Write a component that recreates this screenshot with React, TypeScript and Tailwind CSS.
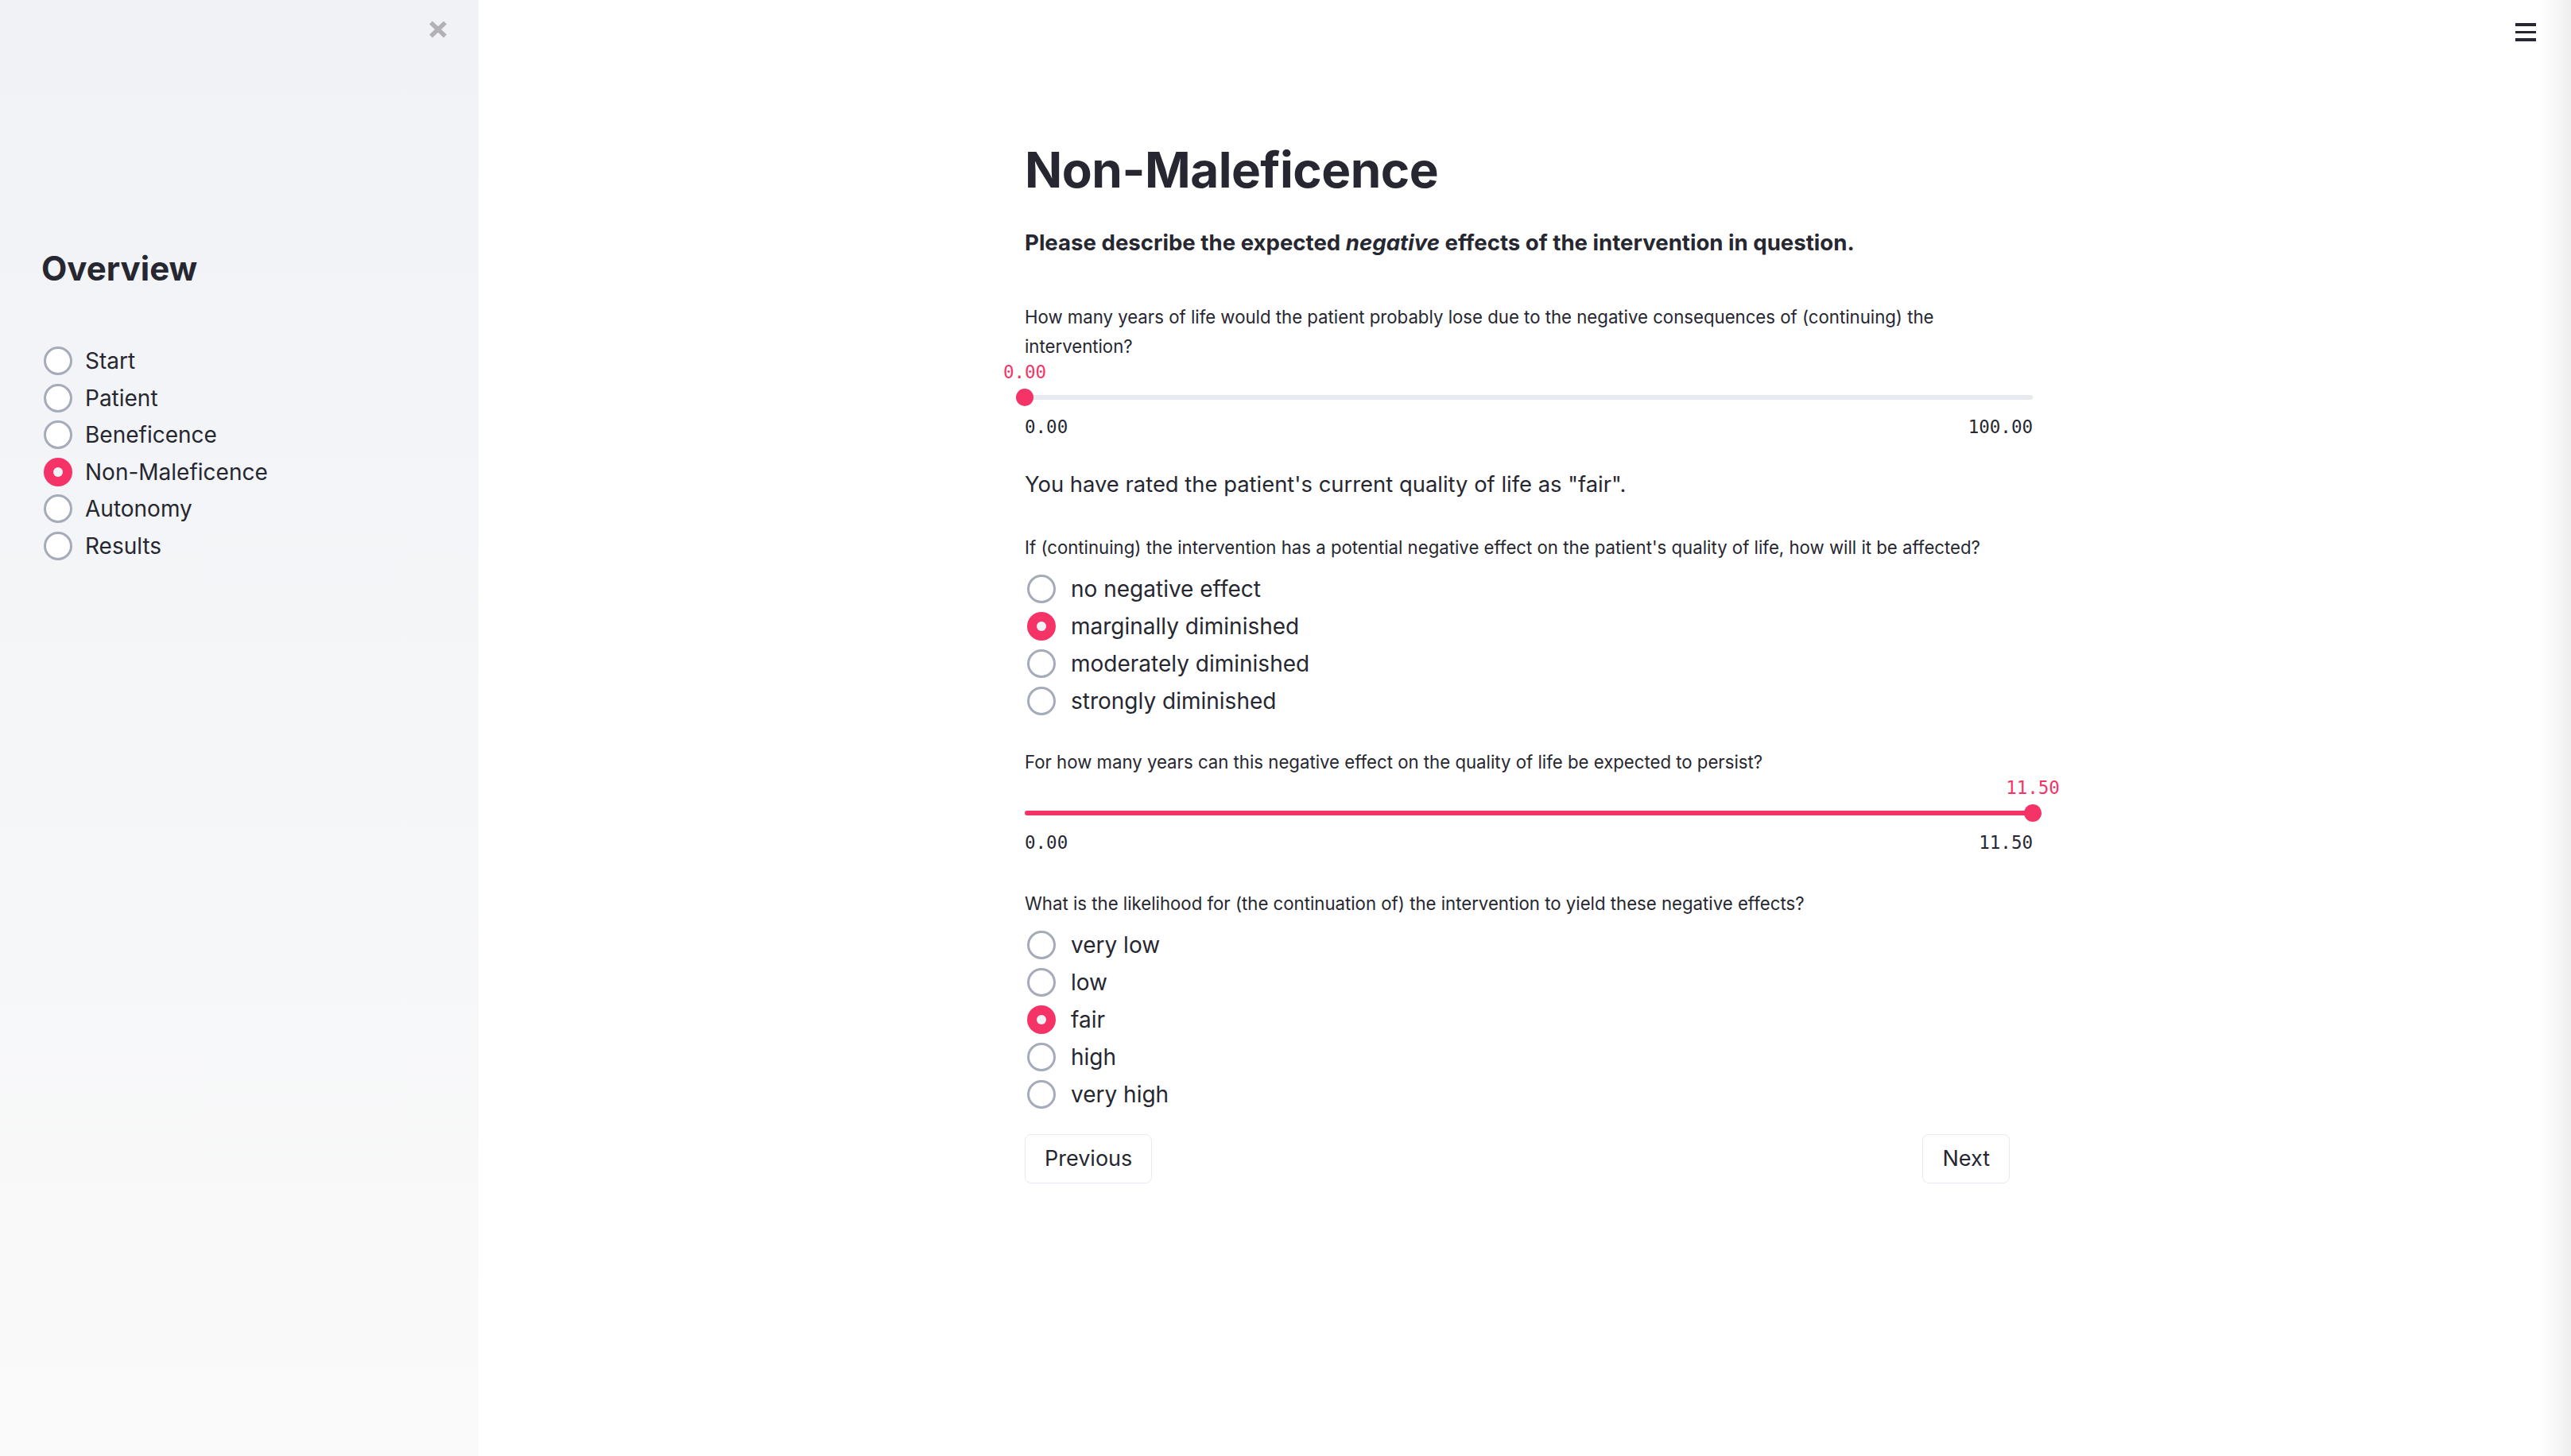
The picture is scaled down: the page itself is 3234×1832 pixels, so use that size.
import React from "react";

const PINK = "#f63366";

const sans = "font-['Inter','Noto_Sans',sans-serif]";
const mono = "font-['DejaVu_Sans_Mono','Liberation_Mono',monospace]";

const pages = ["Start", "Patient", "Beneficence", "Non-Maleficence", "Autonomy", "Results"];
const effectOptions = ["no negative effect", "marginally diminished", "moderately diminished", "strongly diminished"];
const likelihoodOptions = ["very low", "low", "fair", "high", "very high"];

const RadioDot = ({ checked }: { checked: boolean }) =>
    checked ? (
        <span className="flex h-[36px] w-[36px] shrink-0 items-center justify-center rounded-full bg-[#f63366]">
            <span className="h-[12px] w-[12px] rounded-full bg-[#f0f2f6]" />
        </span>
    ) : (
        <span className="h-[36px] w-[36px] shrink-0 rounded-full border-[3px] border-[#a6abba] bg-white" />
    );

interface RadioListProps {
    options: string[];
    selected: string;
    rowClass: string;
    gapClass: string;
}

const RadioList = ({ options, selected, rowClass, gapClass }: RadioListProps) => (
    <div className="flex flex-col">
        {options.map((opt) => (
            <div key={opt} className={`flex items-center ${rowClass} ${gapClass}`}>
                <RadioDot checked={opt === selected} />
                <span className="text-[28px] leading-none text-[#262730]">{opt}</span>
            </div>
        ))}
    </div>
);

interface SliderProps {
    value: number;
    min: number;
    max: number;
}

const Slider = ({ value, min, max }: SliderProps) => {
    const pct = ((value - min) / (max - min)) * 100;
    return (
        <div className={mono}>
            {/* current value above the thumb */}
            <div className="relative h-[28px]">
                <span
                    className="absolute top-0 -translate-x-1/2 text-[22.5px] leading-[28px] text-[#f63366]"
                    style={{ left: `${pct}%` }}
                >
                    {value.toFixed(2)}
                </span>
            </div>
            <div className="relative mt-[6px] flex h-[24px] items-center">
                <div className="h-[6px] w-full rounded-full bg-[#e6e9f0]">
                    <div className="h-full rounded-full bg-[#f63366]" style={{ width: `${pct}%` }} />
                </div>
                <div
                    className="absolute top-1/2 h-[22px] w-[22px] -translate-x-1/2 -translate-y-1/2 rounded-full"
                    style={{ left: `${pct}%`, backgroundColor: PINK }}
                />
            </div>
            <div className="mt-[10px] flex justify-between text-[22.5px] leading-[30px] text-[#262730]">
                <span>{min.toFixed(2)}</span>
                <span>{max.toFixed(2)}</span>
            </div>
        </div>
    );
};

const Label = ({ children, className = "" }: { children: React.ReactNode; className?: string }) => (
    <p className={`text-[22.2px] leading-[37px] text-[#262730] ${className}`}>{children}</p>
);

export default function App() {
    return (
        <div className={`flex h-screen w-full overflow-hidden bg-white ${sans}`}>
            {/* Sidebar */}
            <aside className="flex w-[602px] shrink-0 flex-col bg-gradient-to-b from-[#f0f2f6] to-[#fafafa]">
                <div className="flex justify-end pr-[39px] pt-[26px]">
                    <svg width="24" height="22" viewBox="0 0 24 22" fill="none">
                        <path d="M3 2.5 L21 19.5 M21 2.5 L3 19.5" stroke="#b2b2b6" strokeWidth="5.5" strokeLinecap="butt" />
                    </svg>
                </div>
                <h2 className="mt-[264px] pl-[52px] text-[42px] font-bold leading-[52px] text-[#262730]">Overview</h2>
                <div className="mt-[67px] pl-[55px]">
                    <RadioList options={pages} selected="Non-Maleficence" rowClass="h-[46.5px]" gapClass="gap-[16px]" />
                </div>
            </aside>

            {/* Main */}
            <main className="relative flex flex-1">
                <div className="absolute right-[44px] top-[29px] flex w-[26px] flex-col gap-[6px]">
                    <span className="h-[3.5px] w-full bg-[#262730]" />
                    <span className="h-[3.5px] w-full bg-[#262730]" />
                    <span className="h-[3.5px] w-full bg-[#262730]" />
                </div>

                <div className="flex-1 pl-[687px]">
                    <div className="w-[1268px] pt-[172px]">
                        <h1 className="text-[62px] font-bold leading-[84px] tracking-[-0.5px] text-[#262730]">
                            Non-Maleficence
                        </h1>
                        <p className="mt-[29px] text-[27.6px] font-bold leading-[40px] text-[#262730]">
                            Please describe the expected <em>negative</em> effects of the intervention in question.
                        </p>

                        <Label className="mt-[55px]">
                            How many years of life would the patient probably lose due to the negative consequences of
                            (continuing) the intervention?
                        </Label>
                        <Slider value={0} min={0} max={100} />

                        <p className="mt-[37px] text-[27.4px] leading-[40px] text-[#262730]">
                            You have rated the patient's current quality of life as "fair".
                        </p>

                        <Label className="mt-[41px]">
                            If (continuing) the intervention has a potential negative effect on the patient's quality of
                            life, how will it be affected?
                        </Label>
                        <div className="mt-[10px] pl-[3px]">
                            <RadioList
                                options={effectOptions}
                                selected="marginally diminished"
                                rowClass="h-[47px]"
                                gapClass="gap-[19px]"
                            />
                        </div>

                        <Label className="mt-[35px]">
                            For how many years can this negative effect on the quality of life be expected to persist?
                        </Label>
                        <Slider value={11.5} min={0} max={11.5} />

                        <Label className="mt-[43px]">
                            What is the likelihood for (the continuation of) the intervention to yield these negative
                            effects?
                        </Label>
                        <div className="mt-[10px] pl-[3px]">
                            <RadioList options={likelihoodOptions} selected="fair" rowClass="h-[47px]" gapClass="gap-[19px]" />
                        </div>

                        <div className="mt-[27px] flex justify-between pr-[29px]">
                            <button className="h-[62px] rounded-[8px] border border-[#e6eaf1] bg-white px-[24px] text-[27px] text-[#262730]">
                                Previous
                            </button>
                            <button className="h-[62px] rounded-[8px] border border-[#e6eaf1] bg-white px-[24px] text-[27px] text-[#262730]">
                                Next
                            </button>
                        </div>
                    </div>
                </div>

                {/* soft fade along the right edge */}
                <div className="w-[40px] shrink-0 bg-gradient-to-r from-white to-[#efefef]" />
            </main>
        </div>
    );
}
